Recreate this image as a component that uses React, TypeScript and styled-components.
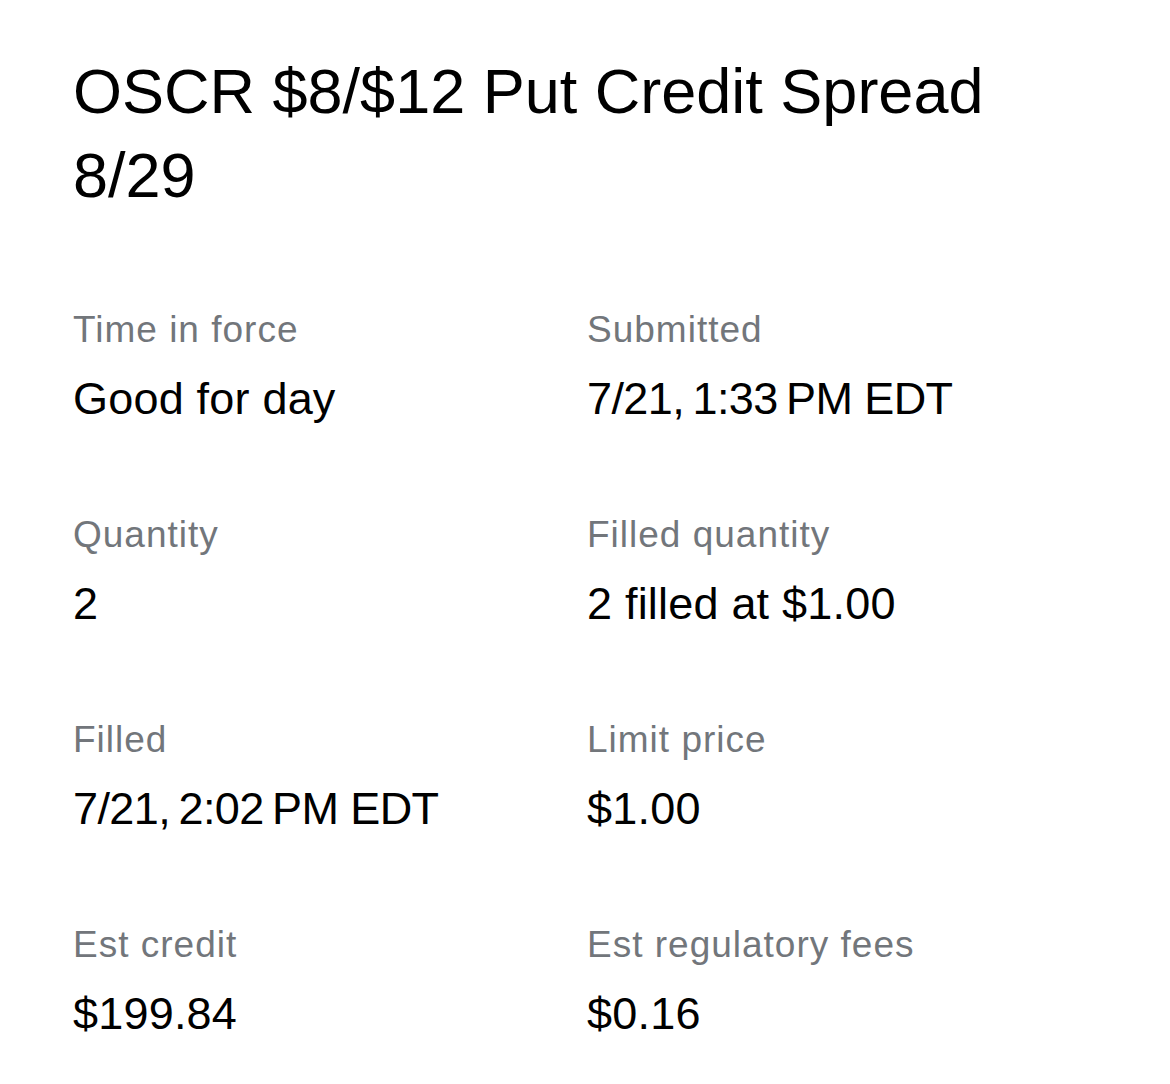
import styled, { createGlobalStyle } from "styled-components";

const GlobalStyle = createGlobalStyle`
  html, body {
    margin: 0;
    padding: 0;
    background: #ffffff;
  }
  body {
    font-family: "Liberation Sans", Arial, sans-serif;
    -webkit-font-smoothing: antialiased;
  }
`;

type Detail = { label: string; value: string; tight?: boolean };

const details: Detail[] = [
  { label: "Time in force", value: "Good for day" },
  { label: "Submitted", value: "7/21,\u20091:33\u202FPM EDT", tight: true },
  { label: "Quantity", value: "2" },
  { label: "Filled quantity", value: "2 filled at $1.00" },
  { label: "Filled", value: "7/21,\u20092:02\u202FPM EDT", tight: true },
  { label: "Limit price", value: "$1.00" },
  { label: "Est credit", value: "$199.84" },
  { label: "Est regulatory fees", value: "$0.16" },
];

const App = () => {
  return (
    <>
      <GlobalStyle />
      <StyledPage>
        <StyledTitle>
          OSCR $8/$12 Put Credit Spread
          <br />
          8/29
        </StyledTitle>
        <StyledGrid>
          {details.map((d) => (
            <StyledItem key={d.label}>
              <StyledLabel>{d.label}</StyledLabel>
              <StyledValue $tight={d.tight}>{d.value}</StyledValue>
            </StyledItem>
          ))}
        </StyledGrid>
      </StyledPage>
    </>
  );
};

const StyledPage = styled.div`
  box-sizing: border-box;
  width: 1170px;
  min-height: 1084px;
  padding: 49px 40px 0 73px;
  color: #000000;
`;

const StyledTitle = styled.h1`
  margin: 0;
  font-size: 63px;
  line-height: 84px;
  font-weight: 400;
  letter-spacing: 0;
`;

const StyledGrid = styled.div`
  display: grid;
  grid-template-columns: 514px 1fr;
  row-gap: 84px;
  margin-top: 89px;
`;

const StyledItem = styled.div`
  display: flex;
  flex-direction: column;
  gap: 17px;
`;

const StyledLabel = styled.div`
  font-size: 37px;
  line-height: 48px;
  letter-spacing: 1px;
  color: #72767b;
  white-space: nowrap;
`;

const StyledValue = styled.div<{ $tight?: boolean }>`
  font-size: 45px;
  line-height: 56px;
  letter-spacing: ${(p) => (p.$tight ? "-0.6px" : "0.2px")};
  color: #000000;
  white-space: nowrap;
`;

export default App;
